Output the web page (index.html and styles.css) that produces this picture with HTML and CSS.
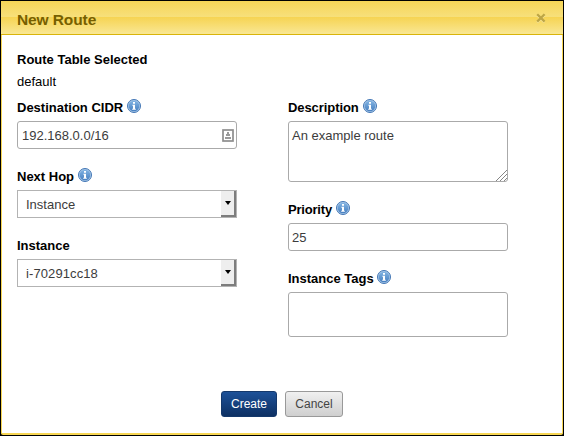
FILE: index.html
```html
<!DOCTYPE html>
<html lang="en">
<head>
<meta charset="utf-8">
<title>New Route</title>
<link rel="stylesheet" href="styles.css">
</head>
<body>
<svg class="defs" width="0" height="0" aria-hidden="true">
  <defs>
    <linearGradient id="blue" x1="0" y1="0" x2="0" y2="1">
      <stop offset="0" stop-color="#82b4e3"/>
      <stop offset="1" stop-color="#477fc0"/>
    </linearGradient>
    <symbol id="info" viewBox="0 0 14 14">
      <circle cx="7" cy="7" r="6.5" fill="#a9c8e8" stroke="#4276b4"/>
      <circle cx="7" cy="7" r="5.3" fill="url(#blue)"/>
      <path d="M6 3h2v1.7H6zM5.4 5.8H8v3.9h.8v1H5.2v-1H6V6.8h-.6z" fill="#fff"/>
    </symbol>
  </defs>
</svg>
<div class="dialog">
  <header class="titlebar">
    <h1 class="title">New Route</h1>
    <svg class="close" width="10" height="10" viewBox="0 0 10 10"><path d="M1.2 1.2l7.2 7.2M8.4 1.2L1.2 8.4" stroke="#f9e8a0" stroke-width="2.2" transform="translate(0 1)"/><path d="M1.2 1.2l7.4 7.4M8.6 1.2L1.2 8.6" stroke="#bda645" stroke-width="2.3"/></svg>
  </header>
  <main class="content">
    <div class="table-name">
      <div class="label">Route Table Selected</div>
      <div class="value">default</div>
    </div>
    <div class="columns">
      <div class="column">
        <div class="field">
          <div class="label"><span>Destination CIDR</span><svg class="info"><use href="#info"/></svg></div>
          <div class="input"><span>192.168.0.0/16</span>
            <svg class="card" width="12" height="13" viewBox="0 0 12 13"><rect x="1" y="1" width="10" height="11" fill="#fff" stroke="#8e8e8e" stroke-width="1.7"/><path d="M5 3h2v2h1v2H4V5h1zM3 8h6v2H3z" fill="#999"/></svg>
          </div>
        </div>
        <div class="field">
          <div class="label"><span>Next Hop</span><svg class="info"><use href="#info"/></svg></div>
          <div class="select"><span>Instance</span><i class="arrow"></i></div>
        </div>
        <div class="field">
          <div class="label"><span>Instance</span></div>
          <div class="select"><span class="id">i-70291cc18</span><i class="arrow"></i></div>
        </div>
      </div>
      <div class="column">
        <div class="field">
          <div class="label"><span class="tight">Description</span><svg class="info"><use href="#info"/></svg></div>
          <div class="input area"><span>An example route</span>
            <svg class="grip" width="11" height="11" viewBox="0 0 11 11"><path d="M0 11L11 0M4 11l7-7M8 11l3-3" stroke="#777" stroke-width=".9"/></svg>
          </div>
        </div>
        <div class="field">
          <div class="label"><span class="tighter">Priority</span><svg class="info"><use href="#info"/></svg></div>
          <div class="input"><span>25</span></div>
        </div>
        <div class="field">
          <div class="label"><span>Instance Tags</span><svg class="info near"><use href="#info"/></svg></div>
          <div class="input tags"></div>
        </div>
      </div>
    </div>
  </main>
  <footer class="actions">
    <button class="btn primary">Create</button>
    <button class="btn">Cancel</button>
  </footer>
</div>
</body>
</html>
```

FILE: styles.css
```css
* { box-sizing: border-box; }
body {
  margin: 0;
  height: 436px;
  padding: 1px;
  background: #000;
  font: 13px/18px "Liberation Sans", Arial, sans-serif;
  color: #000;
  overflow: hidden;
}
.defs { position: absolute; }
.dialog {
  height: 434px;
  display: flex;
  flex-direction: column;
  background: #fff;
  border: solid #f7d654;
  border-width: 0 1px 2px;
  border-radius: 0 0 2px 2px;
}
.titlebar {
  height: 34px;
  flex: none;
  display: flex;
  justify-content: space-between;
  align-items: center;
  margin: 0 -1px;
  padding: 0 17px 0 16px;
  border-bottom: 1px solid #d9b40a;
  background: linear-gradient(#f6d557, #f7e07c 50%, #f6d454 50%, #f9e794);
}
.title {
  margin: 4px 0 0;
  font-size: 15.5px;
  line-height: 20px;
  letter-spacing: -.1px;
  color: #765f00;
}
.close { margin-top: 1px; }
.content { padding: 15px 15px 0; }
.label {
  display: flex;
  align-items: center;
  height: 20px;
  font-weight: bold;
}
.info { width: 14px; height: 14px; margin: -5px 0 0 4px; flex: none; }
.near { margin-left: 3px; }
.table-name { height: 48px; }
.value { height: 20px; line-height: 24px; }
.columns { display: flex; gap: 51px; }
.column { width: 220px; display: flex; flex-direction: column; gap: 18px; }
.field .label { height: 23px; padding-bottom: 3px; }
.tight { letter-spacing: -.08px; }
.tighter { letter-spacing: -.2px; }
.field { display: flex; flex-direction: column; }
.input, .select {
  position: relative;
  display: flex;
  align-items: center;
  justify-content: space-between;
  height: 28px;
  border: 1px solid #aaa;
  background: #fff;
  color: #3c3c3c;
}
.input span, .select span { padding-top: 1px; }
.input { border-radius: 3px; padding: 0 2px 0 4px; }
.column + .column .input { padding-left: 3px; }
.area { height: 61px; align-items: flex-start; padding-top: 4px; }
.tags { height: 45px; }
.grip { position: absolute; right: 0; bottom: 0; }
.select { padding-left: 8px; border-color: #b3b3b3; }
.id { letter-spacing: .1px; }
.arrow {
  width: 15px;
  height: 26px;
  display: flex;
  align-items: center;
  justify-content: center;
  background: #eee;
  border: solid #7d7d7d;
  border-width: 0 2px 2px 0;
}
.arrow::before {
  content: "";
  border: 3px solid transparent;
  border-top: 4px solid #000;
  border-bottom: 0;
}
.actions {
  display: flex;
  justify-content: center;
  gap: 8px;
  margin: auto 0 16px;
}
.btn {
  width: 58px;
  height: 26px;
  padding: 0;
  border: 1px solid #999;
  border-radius: 3px;
  background: linear-gradient(#f0f0f0, #cfcfcf);
  font: 12px "Liberation Sans", Arial, sans-serif;
  color: #444;
}
.primary {
  width: 56px;
  border-color: #14386b;
  background: linear-gradient(#1d5198, #0d3063);
  color: #fff;
}
```
